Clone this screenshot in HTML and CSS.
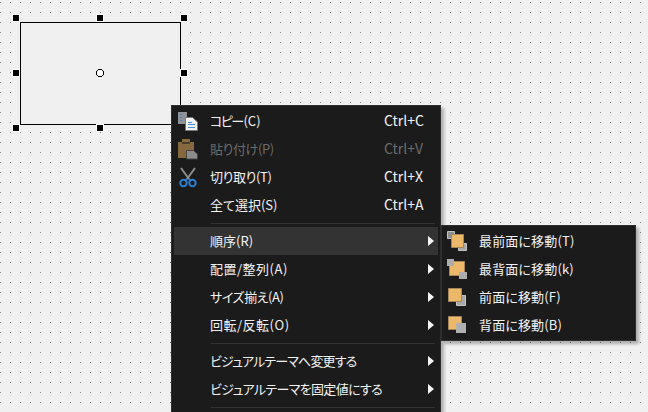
FILE: index.html
```html
<!DOCTYPE html>
<html lang="ja">
<head>
<meta charset="utf-8">
<title>Context menu</title>
<link rel="stylesheet" href="styles.css">
</head>
<body>
<main class="canvas">
  <div class="shape"></div>
  <span class="handle h-tl"></span><span class="handle h-tc"></span><span class="handle h-tr"></span>
  <span class="handle h-ml"></span><span class="handle h-mr"></span>
  <span class="handle h-bl"></span><span class="handle h-bc"></span><span class="handle h-br"></span>
  <svg class="center" width="8" height="8" viewBox="0 0 8 8" shape-rendering="crispEdges"><path fill="#fff" d="M2 1h4v1h1v4H6v1H2V6H1V2h1z"/><path d="M2 0h4v1H2zM2 7h4v1H2zM0 2h1v4H0zM7 2h1v4H7zM1 1h1v1H1zM6 1h1v1H6zM1 6h1v1H1zM6 6h1v1H6z"/></svg>

  <div class="menu main-menu">
    <div class="item"><span class="ico"><svg width="24" height="24" viewBox="0 0 24 24"><path fill="#8f9296" d="M2 3h9v12H2z"/><path fill="#4f7fb5" d="M4 5h2v1H4zM4 8h2v1H4zM4 11h2v1H4z"/><path fill="#f2f2f2" stroke="#777" d="M9.500 8.500h7l5 4.500v8.500h-12z"/><path fill="#4a8fd6" d="M12 13h4v1h-4zM12 15h7v1h-7zM12 18h7v1h-7z"/></svg></span><span class="label"><span class="kana">コピー</span>(C)</span><span class="key">Ctrl+C</span></div>
    <div class="item off"><span class="ico"><svg width="24" height="24" viewBox="0 0 24 24"><path fill="#86693f" d="M2 5h4V2h8v3h4v16H2z"/><path fill="#4b3c27" d="M6 5h8v2H6z"/><path fill="#8c8c8c" stroke="#444" d="M10.500 13.500h7l4 3.500v5h-11z"/></svg></span><span class="label trim">貼り付け(P)</span><span class="key">Ctrl+V</span></div>
    <div class="item"><span class="ico"><svg width="24" height="24" viewBox="0 0 24 24"><path fill="none" stroke="#8d8d8d" stroke-width="2" d="M5 3l8 11M19 3l-8 11"/><path fill="none" stroke="#2f7fd0" stroke-width="2" d="M13 14l2 2M11 14l-2 2"/><circle cx="7.500" cy="18" r="3.200" fill="none" stroke="#2f7fd0" stroke-width="2"/><circle cx="16.500" cy="18" r="3.200" fill="none" stroke="#2f7fd0" stroke-width="2"/></svg></span><span class="label trim">切り取り(T)</span><span class="key">Ctrl+X</span></div>
    <div class="item"><span class="ico"></span><span class="label">全て選択(S)</span><span class="key">Ctrl+A</span></div>
    <div class="sep"></div>
    <div class="item active"><span class="ico"></span><span class="label">順序(R)</span><span class="arrow"></span></div>
    <div class="item"><span class="ico"></span><span class="label wide">配置/整列(A)</span><span class="arrow"></span></div>
    <div class="item"><span class="ico"></span><span class="label trim">サイズ揃え(A)</span><span class="arrow"></span></div>
    <div class="item"><span class="ico"></span><span class="label wide">回転/反転(O)</span><span class="arrow"></span></div>
    <div class="sep"></div>
    <div class="item"><span class="ico"></span><span class="label narrower">ビジュアルテーマへ変更する</span><span class="arrow"></span></div>
    <div class="item"><span class="ico"></span><span class="label narrow">ビジュアルテーマを固定値にする</span><span class="arrow"></span></div>
    <div class="sep"></div>
  </div>

  <div class="menu sub-menu">
    <div class="item"><span class="ico"><svg width="22" height="22" viewBox="0 0 22 22"><path fill="#8f8f8f" stroke="#c2c2c2" d="M1.500 1.500h7v7h-7z"/><path fill="#a8a8a8" stroke="#c2c2c2" d="M12.500 13.500h8v7h-8z"/><path fill="#edb869" stroke="#a5855a" d="M5.500 4.500h12v13h-12z"/></svg></span><span class="label sub">最前面に移動(T)</span></div>
    <div class="item"><span class="ico"><svg width="22" height="22" viewBox="0 0 22 22"><path fill="#edb869" stroke="#a5855a" d="M3.500 3.500h15v14h-15z"/><path fill="#adadad" d="M1 1h7v7H1zM13 14h8v7h-8z"/></svg></span><span class="label sub">最背面に移動(k)</span></div>
    <div class="item"><span class="ico"><svg width="22" height="22" viewBox="0 0 22 22"><path fill="#a8a8a8" stroke="#c8c8c8" d="M10.500 9.500h9v10h-9z"/><path fill="#edb869" stroke="#a5855a" d="M2.500 2.500h13v13h-13z"/></svg></span><span class="label sub">前面に移動(F)</span></div>
    <div class="item"><span class="ico"><svg width="22" height="22" viewBox="0 0 22 22"><path fill="#edb869" stroke="#a5855a" d="M2.500 2.500h13v13h-13z"/><path fill="#b0b0b0" d="M10 9h10v10H10z"/></svg></span><span class="label sub">背面に移動(B)</span></div>
  </div>
</main>
</body>
</html>
```
FILE: styles.css
```css
* { box-sizing: border-box; }
html, body { margin: 0; padding: 0; }
body { width: 648px; height: 412px; overflow: hidden; }
.canvas {
  position: relative;
  width: 648px;
  height: 412px;
  overflow: hidden;
  background-color: #f0f0f0;
  font-family: "Noto Sans CJK JP", "Noto Sans", sans-serif;
  font-feature-settings: "palt";
  font-size: 13px;
  color: #f2f2f2;
}
.canvas::before {
  content: "";
  position: absolute;
  inset: 0;
  background: linear-gradient(90deg, #858585 1px, transparent 1px) 0 0 / 10px 10px;
  -webkit-mask: linear-gradient(#000 1px, transparent 1px) 0 2px / 10px 10px;
  mask: linear-gradient(#000 1px, transparent 1px) 0 2px / 10px 10px;
}
.shape { position: absolute; left: 20px; top: 22px; width: 161px; height: 103px; background: #f0f0f0; border: 1px solid #000; }
.handle { position: absolute; width: 8px; height: 8px; background: #000; border: 1px solid #fff; }
.h-tl { left: 12px; top: 14px; } .h-tc { left: 96px; top: 14px; } .h-tr { left: 180px; top: 14px; }
.h-ml { left: 12px; top: 69px; } .h-mr { left: 180px; top: 69px; }
.h-bl { left: 12px; top: 124px; } .h-bc { left: 96px; top: 124px; } .h-br { left: 180px; top: 124px; }
.center { position: absolute; left: 96px; top: 69px; }
.menu { position: absolute; background: #1b1b1b; border: 1px solid #2e2e2e; padding: 1px 2px; box-shadow: 3px 3px 3px rgba(0,0,0,.28); }
.main-menu { left: 171px; top: 105px; width: 270px; }
.sub-menu { left: 441px; top: 225px; width: 195px; }
.item { display: flex; align-items: center; height: 28px; }
.active { background: #333; }
.off { color: #6c6c6c; }
.ico { width: 36px; flex: none; display: flex; align-items: center; padding-left: 2px; }
.sub-menu .ico { width: 35px; }
.label { flex: 1; white-space: nowrap; line-height: 1; padding-bottom: 2px; }
.kana { letter-spacing: -1.6px; margin-right: 1px; }
.trim { letter-spacing: -.4px; }
.wide { letter-spacing: .5px; }
.narrow { letter-spacing: -.65px; }
.narrower { letter-spacing: -.85px; }
.sub { letter-spacing: .15px; }
.key { width: 54px; flex: none; font-size: 14px; line-height: 1; padding-bottom: 2px; }
.arrow { width: 0; height: 0; border-left: 6px solid #f5f5f5; border-top: 5px solid transparent; border-bottom: 5px solid transparent; margin-right: 4px; }
.sep { height: 1px; margin: 4px 3px 3px 37px; background: #333; box-sizing: content-box; }
```
